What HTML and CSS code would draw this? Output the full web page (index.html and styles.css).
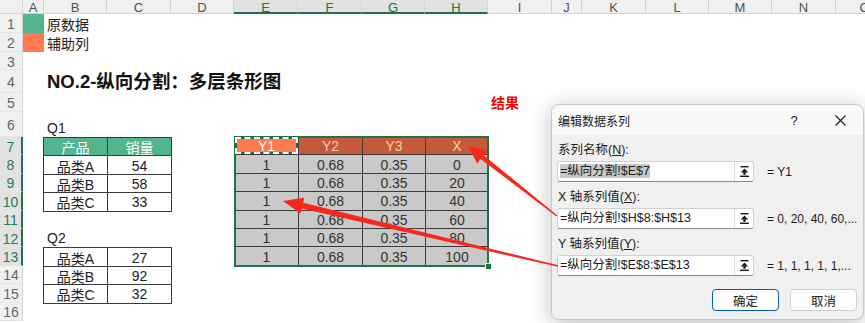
FILE: index.html
```html
<!DOCTYPE html>
<html lang="zh-CN">

<head>
  <meta charset="UTF-8">
  <title>纵向分割：多层条形图</title>
  <link rel="stylesheet" href="styles.css">
</head>

<body>
  <div class="sheet">

    <!-- Column headers -->
    <div class="colheads">
      <div class="corner"></div>
      <div class="ch w21">A</div>
      <div class="ch w63">B</div>
      <div class="ch w64">C</div>
      <div class="ch w63">D</div>
      <div class="ch w64 on">E</div>
      <div class="ch w64 on">F</div>
      <div class="ch w63 on">G</div>
      <div class="ch w63 on">H</div>
      <div class="ch w64">I</div>
      <div class="ch w30">J</div>
      <div class="ch w64">K</div>
      <div class="ch w63">L</div>
      <div class="ch w63">M</div>
      <div class="ch w64">N</div>
      <div class="ch w58">O</div>
    </div>

    <div class="main">
      <!-- Row headers -->
      <div class="rowheads">
        <div class="rh r19">1</div>
        <div class="rh r19">2</div>
        <div class="rh r18">3</div>
        <div class="rh r23">4</div>
        <div class="rh r19">5</div>
        <div class="rh r25">6</div>
        <div class="rh on">7</div>
        <div class="rh on">8</div>
        <div class="rh on">9</div>
        <div class="rh on">10</div>
        <div class="rh on">11</div>
        <div class="rh on">12</div>
        <div class="rh on">13</div>
        <div class="rh">14</div>
        <div class="rh">15</div>
        <div class="rh">16</div>
      </div>

      <!-- Cells -->
      <div class="cells">
        <div class="legend"><span class="swatch green"></span><span class="legend-text">原数据</span></div>
        <div class="legend"><span class="swatch orange"></span><span class="legend-text">辅助列</span></div>
        <div class="blank"></div>
        <div class="title">NO.2-纵向分割：多层条形图</div>
        <div class="result-row"><span class="result">结果</span></div>
        <div class="label-row">Q1</div>

        <div class="tables">
          <div class="left">
            <div class="t1">
              <div class="th">产品</div><div class="th">销量</div>
              <div>品类A</div><div>54</div>
              <div>品类B</div><div>58</div>
              <div>品类C</div><div>33</div>
            </div>
            <div class="label-row q2">Q2</div>
            <div class="t1">
              <div>品类A</div><div>27</div>
              <div>品类B</div><div>92</div>
              <div>品类C</div><div>32</div>
            </div>
          </div>

          <div class="range">
            <div class="t3">
              <div class="hd y1">Y1</div><div class="hd">Y2</div><div class="hd">Y3</div><div class="hd">X</div>
              <div>1</div><div>0.68</div><div>0.35</div><div>0</div>
              <div>1</div><div>0.68</div><div>0.35</div><div>20</div>
              <div>1</div><div>0.68</div><div>0.35</div><div>40</div>
              <div>1</div><div>0.68</div><div>0.35</div><div>60</div>
              <div>1</div><div>0.68</div><div>0.35</div><div>80</div>
              <div>1</div><div>0.68</div><div>0.35</div><div>100</div>
            </div>
          </div>
        </div>
      </div>
    </div>

    <!-- Edit series dialog -->
    <div class="dialog">
      <div class="dlg-title">
        <span class="dlg-name">编辑数据系列</span>
        <span class="dlg-help">?</span>
        <span class="dlg-close">
          <svg width="11" height="11" viewBox="0 0 11 11"><path d="M0.5 0.5 L10.5 10.5 M10.5 0.5 L0.5 10.5" stroke="#1b1b1b" stroke-width="1.1" fill="none"/></svg>
        </span>
      </div>
      <div class="dlg-body">
        <div class="field-label">系列名称(<u>N</u>):</div>
        <div class="field-row">
          <div class="ref-box">
            <span class="ref-text"><span class="sel">=纵向分割!$E$7</span></span>
            <span class="ref-btn"><svg width="9" height="11" viewBox="0 0 9 11"><rect x="0.5" y="0" width="8" height="1.4" fill="#1b1b1b"/><path d="M4.5 2.6 L8.2 6.4 L0.8 6.4 Z" fill="#1b1b1b"/><rect x="3.3" y="6.2" width="2.4" height="2.6" fill="#1b1b1b"/><rect x="0" y="9.6" width="9" height="1.4" fill="#1b1b1b"/></svg></span>
          </div>
          <span class="ref-value">= Y1</span>
        </div>

        <div class="field-label">X 轴系列值(<u>X</u>):</div>
        <div class="field-row">
          <div class="ref-box">
            <span class="ref-text">=纵向分割!$H$8:$H$13</span>
            <span class="ref-btn"><svg width="9" height="11" viewBox="0 0 9 11"><rect x="0.5" y="0" width="8" height="1.4" fill="#1b1b1b"/><path d="M4.5 2.6 L8.2 6.4 L0.8 6.4 Z" fill="#1b1b1b"/><rect x="3.3" y="6.2" width="2.4" height="2.6" fill="#1b1b1b"/><rect x="0" y="9.6" width="9" height="1.4" fill="#1b1b1b"/></svg></span>
          </div>
          <span class="ref-value">= 0, 20, 40, 60,...</span>
        </div>

        <div class="field-label">Y 轴系列值(<u>Y</u>):</div>
        <div class="field-row">
          <div class="ref-box">
            <span class="ref-text">=纵向分割!$E$8:$E$13</span>
            <span class="ref-btn"><svg width="9" height="11" viewBox="0 0 9 11"><rect x="0.5" y="0" width="8" height="1.4" fill="#1b1b1b"/><path d="M4.5 2.6 L8.2 6.4 L0.8 6.4 Z" fill="#1b1b1b"/><rect x="3.3" y="6.2" width="2.4" height="2.6" fill="#1b1b1b"/><rect x="0" y="9.6" width="9" height="1.4" fill="#1b1b1b"/></svg></span>
          </div>
          <span class="ref-value">= 1, 1, 1, 1, 1,...</span>
        </div>

        <div class="dlg-buttons">
          <button class="btn btn-default">确定</button>
          <button class="btn">取消</button>
        </div>
      </div>
    </div>

    <!-- Annotation arrows -->
    <svg class="arrows" width="865" height="323" viewBox="0 0 865 323">
      <polygon points="557.4,215.5 483.7,155.2 487.1,150.8 468,146 477.2,163.4 480.6,159.1 556.6,216.6" fill="#f8261c"/>
      <polygon points="558.2,265.2 303.2,202.7 304.3,197.8 283,201 300.6,213.4 301.8,208.5 557.8,266.8" fill="#f8261c"/>
    </svg>

  </div>
</body>

</html>
```

FILE: styles.css
```css
body {
  margin: 0;
  font-family: "Liberation Sans", "Noto Sans CJK SC", sans-serif;
  font-size: 14px;
  color: #222;
  background: white;
  overflow: hidden;
}

.sheet {
  position: relative;
  width: 865px;
  height: 323px;
  overflow: hidden;
}

/* Column headers */
.colheads {
  display: flex;
  height: 14px;
  background: #f0f0f0;
}

.corner {
  flex: 0 0 23px;
  box-sizing: border-box;
  border-right: 1px solid #d4d4d4;
  border-bottom: 1px solid #d4d4d4;
}

.ch {
  flex-shrink: 0;
  box-sizing: border-box;
  border-right: 1px solid #d4d4d4;
  border-bottom: 1px solid #d4d4d4;
  text-align: center;
  font-size: 13px;
  line-height: 15px;
  color: #505050;
  overflow: hidden;
}

.ch.on {
  background: #e2e2e2;
  color: #217346;
  border-bottom: 2px solid #217346;
}

.w21 { width: 21px; }
.w30 { width: 30px; }
.w58 { width: 58px; }
.w63 { width: 63px; }
.w64 { width: 64px; }

.main {
  display: flex;
}

/* Row headers */
.rowheads {
  flex: 0 0 23px;
  background: #f0f0f0;
}

.rh {
  box-sizing: border-box;
  height: 18.4px;
  border-right: 1px solid #d4d4d4;
  border-bottom: 1px solid #e4e4e4;
  display: flex;
  align-items: center;
  justify-content: center;
  padding-top: 2px;
  font-size: 14px;
  color: #666;
}

.rh.on {
  background: #e2e2e2;
  color: #2a7a55;
  border-right: 2px solid #217346;
}

.r18 { height: 18px; }
.r19 { height: 19px; }
.r23 { height: 23px; }
.r25 { height: 25px; }

/* Cells */
.cells {
  flex: 1;
}

.legend {
  display: flex;
  align-items: center;
  height: 19px;
}

.swatch {
  width: 21px;
  height: 19px;
}

.green {
  background: #52b58e;
}

.orange {
  background: #ff7a4e;
}

.legend-text {
  padding-left: 3px;
}

.blank {
  height: 18px;
}

.title {
  height: 23px;
  line-height: 23px;
  padding-left: 24px;
  font-size: 18.5px;
  font-weight: bold;
  color: #111;
}

.result-row {
  height: 19px;
  line-height: 20px;
}

.result {
  margin-left: 468px;
  color: #ff0000;
  font-weight: bold;
}

.label-row {
  height: 25px;
  display: flex;
  align-items: flex-end;
  padding-left: 24px;
  line-height: 18px;
}

.label-row.q2 {
  height: 35.8px;
  padding-left: 4px;
}

.tables {
  display: flex;
  align-items: flex-start;
}

.left {
  margin-left: 20px;
}

.t1 {
  display: grid;
  grid-template-columns: 64px 64px;
  grid-auto-rows: 18.4px;
  border-left: 1px solid #3a3a3a;
  border-top: 1px solid #3a3a3a;
  width: max-content;
}

.t1 > div {
  box-sizing: border-box;
  border-right: 1px solid #3a3a3a;
  border-bottom: 1px solid #3a3a3a;
  display: flex;
  align-items: center;
  justify-content: center;
  padding-top: 1px;
}

.t1 .th {
  background: #52b58e;
  color: white;
}

/* Selected range E7:H13 */
.range {
  position: relative;
  margin-left: 63px;
  outline: 2px solid #217346;
  outline-offset: -1px;
}

.range::after {
  content: "";
  position: absolute;
  right: -4px;
  bottom: -4px;
  width: 5px;
  height: 5px;
  background: #217346;
  border: 1px solid white;
}

.t3 {
  display: grid;
  grid-template-columns: 64px 64px 63px 62px;
  grid-auto-rows: 18.4px;
}

.t3 > div {
  box-sizing: border-box;
  border-right: 1px solid #3c3c3c;
  border-bottom: 1px solid #3c3c3c;
  display: flex;
  align-items: center;
  justify-content: center;
  padding-top: 1px;
  background: #c9c9c9;
  color: #333;
}

.t3 > div:nth-child(4n) {
  border-right: none;
}

.t3 > div:nth-last-child(-n+4) {
  border-bottom: none;
}

.t3 .hd {
  background: #c55a3b;
  color: #f3cdbd;
}

.t3 .hd.y1 {
  position: relative;
  background: #ff7a4e;
  color: white;
  box-shadow: inset 0 0 0 2px #1d6b40;
}

.t3 .hd.y1::after {
  content: "";
  position: absolute;
  inset: 0;
  border: 2px dashed white;
}

/* Dialog */
.dialog {
  position: absolute;
  left: 551px;
  top: 104px;
  width: 313px;
  height: 216px;
  box-sizing: border-box;
  background: #f0f0f0;
  border: 1px solid #c6c6c6;
  border-radius: 8px;
  box-shadow: 0 4px 22px rgba(0, 0, 0, 0.25);
  overflow: hidden;
  font-size: 12.5px;
  color: #1b1b1b;
}

.dlg-title {
  display: flex;
  align-items: center;
  height: 30px;
  background: #f9f9f9;
}

.dlg-name {
  flex: 1;
  padding-left: 6px;
  font-size: 12px;
}

.dlg-help,
.dlg-close {
  width: 46px;
  display: flex;
  justify-content: center;
  font-size: 13px;
}

.dlg-body {
  padding: 6px 0 0 5px;
}

.field-label {
  height: 18px;
  line-height: 18px;
  padding-left: 1px;
  margin-top: 6px;
}

.field-label:first-child {
  margin-top: 0;
}

.field-row {
  display: flex;
  align-items: center;
  margin-top: 2px;
}

.ref-box {
  display: flex;
  width: 197px;
  height: 21px;
  box-sizing: border-box;
  background: white;
  border: 1px solid #d0d0d0;
  border-bottom-color: #8a8a8a;
  border-radius: 3px;
}

.ref-text {
  flex: 1;
  padding-left: 2px;
  line-height: 19px;
  white-space: nowrap;
  overflow: hidden;
}

.sel {
  background: #c8c8c8;
}

.ref-btn {
  width: 18px;
  border-left: 1px solid #dcdcdc;
  display: flex;
  align-items: center;
  justify-content: center;
}

.ref-value {
  margin-left: 13px;
  font-size: 12px;
}

.dlg-buttons {
  display: flex;
  justify-content: flex-end;
  gap: 11px;
  margin-top: 13px;
  padding-right: 6px;
}

.btn {
  width: 67px;
  height: 22px;
  font: inherit;
  color: #1b1b1b;
  background: #fdfdfd;
  border: 1px solid #d0d0d0;
  border-radius: 4px;
}

.btn-default {
  border-color: #005fb8;
}

.arrows {
  position: absolute;
  left: 0;
  top: 0;
  pointer-events: none;
}
```
